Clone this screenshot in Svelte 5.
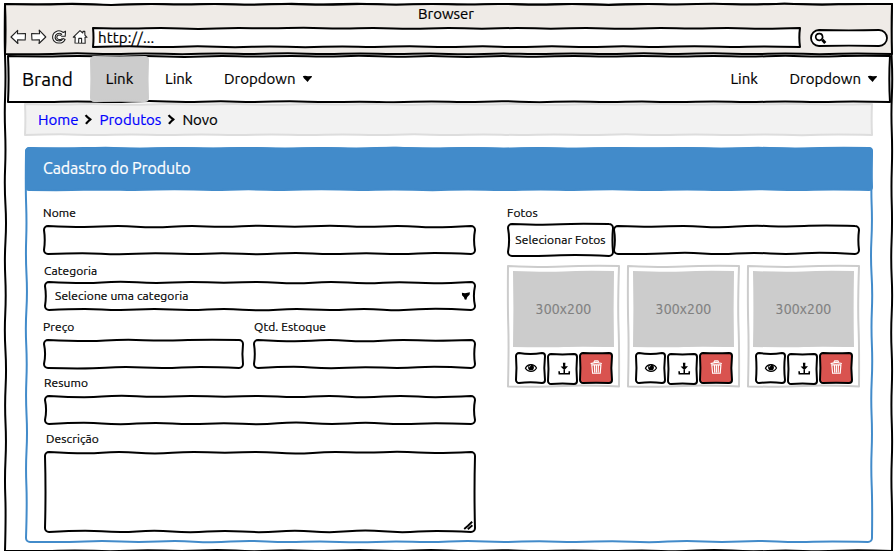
<script>
  // Pseudo-random generator, so that each frame keeps its own hand-drawn shape.
  function random(seed) {
    let s = (seed * 7919 + 104729) % 2147483647;
    return () => (s = (s * 16807) % 2147483647) / 2147483647;
  }

  // One wobbly edge, from a to b, smoothed through the midpoints.
  function edge(ax, ay, bx, by, amp, rnd) {
    const len = Math.hypot(bx - ax, by - ay);
    if (len < 2) return `L${bx} ${by}`;
    const n = Math.max(2, Math.round(len / 36));
    const nx = -(by - ay) / len;
    const ny = (bx - ax) / len;
    const pts = [];
    for (let i = 1; i < n; i++) {
      const t = i / n;
      const off = (i % 2 ? 1 : -0.4) * amp * (0.6 + rnd() * 0.8);
      pts.push([ax + (bx - ax) * t + nx * off, ay + (by - ay) * t + ny * off]);
    }
    let d = '';
    pts.forEach(([x, y], i) => {
      const next = pts[i + 1];
      const ex = next ? (x + next[0]) / 2 : bx;
      const ey = next ? (y + next[1]) / 2 : by;
      d += `Q${x.toFixed(2)} ${y.toFixed(2)} ${ex.toFixed(2)} ${ey.toFixed(2)}`;
    });
    return d;
  }

  function rough(w, h, r, amp, seed) {
    const rnd = random(seed);
    const k = r * 0.45;
    return (
      `M${r} 0` + edge(r, 0, w - r, 0, amp, rnd) + `C${w - k} 0 ${w} ${k} ${w} ${r}` +
      edge(w, r, w, h - r, amp, rnd) + `C${w} ${h - k} ${w - k} ${h} ${w - r} ${h}` +
      edge(w - r, h, r, h, amp, rnd) + `C${k} ${h} 0 ${h - k} 0 ${h - r}` +
      edge(0, h - r, 0, r, amp, rnd) + `C0 ${k} ${k} 0 ${r} 0Z`
    );
  }

  const photos = [1, 2, 3];
</script>

{#snippet frame(w, h, seed, r = 4, fill = '#fff', stroke = '#000', amp = 1.6, sw = 2)}
  <svg class="frame" width={w} height={h} aria-hidden="true">
    <path d={rough(w, h, r, amp, seed)} {fill} {stroke} stroke-width={sw} stroke-linejoin="round" />
  </svg>
{/snippet}

{#snippet caret()}
  <svg class="caret" width="11" height="8" viewBox="0 0 11 8"><path d="M.8 1.3 3 .8 6 1.2 9.8.9 9.9 2 7.7 4.2 5.6 6.9 3.9 5.2 1.9 3.2Z" /></svg>
{/snippet}

{#snippet chevron()}
  <svg class="chevron" width="8" height="11" viewBox="0 0 8 11"><path d="M1.6 1.2C2.6 2.6 4.4 4 6.3 5.4 5 6.7 3.2 8 2 9.9" /></svg>
{/snippet}

<div class="window">
  {@render frame(887, 547, 3, 0, '#fff', '#000', 1.2)}
  <header class="chrome">
    {@render frame(887, 50, 5, 0, '#efebe7', '#000', 1)}
    <div class="title">Browser</div>
    <div class="toolbar">
      <div class="icons">
        <svg width="17" height="16" viewBox="0 0 17 16"><path d="M1 8 7.7 1.3 7.4 4.8 15.5 4.6 15.2 11 7.5 10.8 7.9 14.5Z" /></svg>
        <svg width="17" height="16" viewBox="0 0 17 16"><path d="M14.8 8 8.2 1.2 8.6 4.8 .6 4.6 1 11 8.5 10.8 8 14.5Z" /></svg>
        <svg width="16" height="16" viewBox="0 0 16 16"><path d="M13.5 2.2 13.2 7.2 7.6 7.2 9.8 5.2C6.7 3 3 5 3.1 8.4 3.3 12 8.5 13.4 11 9.6L13.1 10.4C10.4 15.8 2.2 15 .7 9.3 -.2 3.3 6.4-.5 11.3 3.5Z" /><path d="M8.7 6.5C6.8 5.4 4.8 6.5 4.8 8.5 5.1 10.6 8 11.5 9.9 9.6" /></svg>
        <svg width="16" height="16" viewBox="0 0 16 16"><path d="M1.3 8.2 8 1.6 10.8 4 11 2.2 12.8 2.4 12.9 6.1 15 8.3 13 8.2 13.2 14.2 3 14 3.2 8.1ZM6.6 13.8 6.8 9.3 9.6 9.4 9.6 13.8" /></svg>
      </div>
      <div class="url">
        {@render frame(707, 19, 8, 0, '#fff', '#000', 1)}
        <span>http://...</span>
      </div>
      <div class="search">
        {@render frame(76, 16, 14, 8, '#fff', '#000', 0.5, 1.8)}
        <svg width="14" height="14" viewBox="0 0 14 14"><path d="M5.4 1.6C2.9 1.5 1.6 3.3 1.7 5.2 2 7.6 4 8.6 5.8 8.3 8 7.9 9 6 8.5 4.1 8.1 2.4 6.7 1.5 5.4 1.6Z" /><path class="handle" d="M8.3 7.8 11.3 11" /></svg>
      </div>
    </div>
  </header>

  <nav class="navbar">
    {@render frame(882, 46, 21, 0, '#fff', '#000', 1)}
    <span class="brand">Brand</span>
    <span class="item active">
      {@render frame(57, 44, 31, 3, '#ccc', '#ccc', 0.7)}
      <span>Link</span>
    </span>
    <span class="item second">Link</span>
    <span class="item drop">Dropdown {@render caret()}</span>
    <span class="spacer"></span>
    <span class="item right">Link</span>
    <span class="item drop last">Dropdown {@render caret()}</span>
  </nav>

  <div class="crumbs">
    {@render frame(847, 31, 44, 0, '#f2f2f2', '#ddd', 0.9)}
    <a href="#home">Home</a>
    {@render chevron()}
    <a href="#produtos">Produtos</a>
    {@render chevron()}
    <span>Novo</span>
  </div>

  <main class="panel">
    {@render frame(846, 394, 51, 4, '#fff', '#428bca', 1.2)}
    <div class="heading">
      {@render frame(846, 42, 52, 3, '#428bca', '#428bca', 0.9)}
      <h1>Cadastro do Produto</h1>
    </div>
    <div class="columns">
      <form class="form">
        <div class="label">Nome</div>
        <div class="input">{@render frame(431, 28, 61)}</div>
        <div class="label cat">Categoria</div>
        <div class="input inset select">
          {@render frame(430, 28, 62)}
          <span>Selecione uma categoria</span>
          <svg width="9" height="9" viewBox="0 0 9 9"><path d="M.9.8 4 1.3 8.9.3 8.6 2.8 6.3 5 5.3 7.7 3.7 7.6 2.9 5.2 1 3.3Z" /></svg>
        </div>
        <div class="pair">
          <div class="price">
            <div class="label">Preço</div>
            <div class="input">{@render frame(199, 28, 63)}</div>
          </div>
          <div class="stock">
            <div class="label">Qtd. Estoque</div>
            <div class="input">{@render frame(221, 28, 64)}</div>
          </div>
        </div>
        <div class="label resumo">Resumo</div>
        <div class="input inset">{@render frame(430, 28, 65)}</div>
        <div class="label desc">Descrição</div>
        <div class="input inset area">
          {@render frame(430, 80, 66)}
          <svg width="12" height="11" viewBox="0 0 12 11"><path d="M1.2 8 5 4.8 9.2.8M4.8 8.3 9.4 4.3" /></svg>
        </div>
      </form>

      <section class="gallery">
        <div class="label">Fotos</div>
        <div class="upload">
          <div class="choose">{@render frame(105, 32, 71)}<span>Selecionar Fotos</span></div>
          <div class="path">{@render frame(245, 28, 72)}</div>
        </div>
        <div class="cards">
          {#each photos as photo (photo)}
            <article class="card">
              {@render frame(111, 120.5, 81, 0, '#fff', '#ccc', 1.3)}
              <div class="thumb">
                {@render frame(101, 76, 82, 0, '#ccc', 'none', 1)}
                <span>300x200</span>
              </div>
              <div class="actions">
                <div class="btn">
                  {@render frame(29, 30, 83, 3, '#fff', '#000', 1.3)}
                  <svg width="14" height="12" viewBox="0 0 14 12"><path d="M1.4 6.3C3.5 1.6 10 1.2 12.5 6 10.3 10.4 4 10.6 1.4 6.3Z" fill="none" stroke="#000" stroke-width="1.2" /><circle cx="7" cy="5.4" r="2.9" /><path d="M5.2 5.3C5.3 4.2 5.9 3.7 6.7 3.7" fill="none" stroke="#fff" stroke-width=".9" /></svg>
                </div>
                <div class="btn save">
                  {@render frame(29, 30, 84, 3, '#fff', '#000', 1.3)}
                  <svg width="14" height="14" viewBox="0 0 14 14"><path d="M6.9.8H9.4L9.2 4.3H12L8.3 8.3 4.6 4.4H7.1ZM7.5 8H9V11H7.5Z" /><path d="M3.1 9.3 3.3 11.8H13.2L13.3 9.3" fill="none" stroke="#000" stroke-width="1.6" /></svg>
                </div>
                <div class="btn danger">
                  {@render frame(32, 30, 85, 3, '#d9534f', '#000', 1)}
                  <svg width="14" height="16" viewBox="0 0 14 16"><path d="M1.6 3.6 7.1 2.4 12.9 3.5M4.9 2.2 5.7.8 8.9.9 9.7 2.3M2.8 4.8 3.6 13.2H11.2L11.9 4.8ZM5.4 5.3 5.7 12.5M7.4 5.3V12.5M9.4 5.3 9.2 12.5" fill="none" stroke="#fff" stroke-width="1.15" /></svg>
                </div>
              </div>
            </article>
          {/each}
        </div>
      </section>
    </div>
  </main>
</div>

<style>
  :global(body) {
    background: #fff;
    overflow: hidden;
  }

  .window {
    position: relative;
    box-sizing: border-box;
    width: 887px;
    height: 547px;
    margin: 4px 0 0 5px;
    font-family: Ubuntu, 'Noto Sans', sans-serif;
    font-size: 15px;
    line-height: 16px;
    color: #000;
    white-space: nowrap;
    -webkit-text-stroke: 0.2px currentColor;
  }

  .window :global(svg) {
    display: block;
    flex: none;
    overflow: visible;
  }

  .window .frame {
    position: absolute;
    left: 0;
    top: 0;
  }

  span,
  a,
  h1 {
    position: relative;
  }

  /* Browser chrome */
  .chrome {
    position: relative;
    height: 50px;
  }

  .title {
    position: relative;
    height: 24px;
    padding-top: 2px;
    box-sizing: border-box;
    text-align: center;
    text-indent: -5px;
  }

  .toolbar {
    position: relative;
    display: flex;
    height: 19px;
  }

  .icons {
    display: flex;
    gap: 4px;
    width: 88px;
    padding: 1px 0 0 5px;
    box-sizing: border-box;
  }

  .icons path {
    fill: #fff;
    stroke: #222;
    stroke-width: 1.1;
    stroke-linejoin: round;
  }

  .url {
    position: relative;
    width: 707px;
    height: 19px;
    line-height: 19px;
    letter-spacing: 0.15px;
  }

  .url span {
    margin-left: 5px;
  }

  .search {
    position: relative;
    width: 76px;
    height: 16px;
    margin: 2px 0 0 10.5px;
  }

  .search svg:last-child {
    position: relative;
    margin: 2px 0 0 3px;
  }

  .search svg:last-child path {
    fill: none;
    stroke: #000;
    stroke-width: 1.7;
  }

  .search svg:last-child .handle {
    stroke-width: 3;
  }

  /* Navigation bar */
  .navbar {
    position: relative;
    display: flex;
    align-items: center;
    width: 882px;
    height: 46px;
    margin: 2px 0 0 3px;
  }

  .brand {
    width: 69px;
    margin-left: 14px;
    font-size: 19px;
  }

  .item {
    display: flex;
    align-items: center;
  }

  .active {
    width: 57px;
    height: 44px;
    margin-right: 17px;
    justify-content: center;
  }

  .second {
    width: 59px;
  }

  .drop {
    gap: 6px;
  }

  .spacer {
    flex: 1;
  }

  .right {
    width: 59px;
  }

  .last {
    margin-right: 12px;
  }

  /* Breadcrumb */
  .crumbs {
    position: relative;
    display: flex;
    align-items: center;
    width: 834px;
    height: 31px;
    margin: 2px 0 0 20px;
    padding-left: 13px;
  }

  .crumbs a {
    color: #00f;
    text-decoration: none;
  }

  .chevron {
    position: relative;
    margin: 0 7px 0 6px;
    fill: none;
    stroke: #000;
    stroke-width: 2.2;
  }

  /* Panel */
  .panel {
    position: relative;
    width: 846px;
    height: 394px;
    margin: 13px 0 0 21px;
  }

  .heading {
    position: relative;
    height: 42px;
  }

  h1 {
    margin: 0 0 0 17px;
    font-size: 16px;
    font-weight: 400;
    line-height: 41px;
    letter-spacing: -0.1px;
    color: #fff;
  }

  .columns {
    position: relative;
    display: flex;
    gap: 33px;
    padding: 14px 0 0 18px;
    font-size: 12px;
    letter-spacing: 0.1px;
  }

  .form {
    width: 431px;
  }

  .label {
    height: 16px;
    margin: 0 0 6px -1px;
    line-height: 18px;
  }

  .cat {
    margin: 8px 0 4px;
  }

  .resumo {
    margin: 6px 0 6px;
  }

  .desc {
    margin: 6px 0 6px 2px;
  }

  .input {
    position: relative;
    height: 28px;
  }

  .inset {
    margin-left: 1px;
  }

  .select {
    display: flex;
    align-items: center;
    justify-content: space-between;
    padding: 0 5px 0 10px;
  }

  .select svg:last-child {
    position: relative;
  }

  .area {
    display: flex;
    align-items: flex-end;
    justify-content: flex-end;
    height: 80px;
  }

  .area svg:last-child {
    position: relative;
    fill: none;
    stroke: #000;
    stroke-width: 1.9;
  }

  .pair {
    display: flex;
    gap: 11px;
    margin-top: 8px;
  }

  .price {
    width: 199px;
  }

  .stock {
    width: 221px;
  }

  .stock .label {
    margin-left: 0;
  }

  /* Photos */
  .upload {
    display: flex;
    align-items: center;
    height: 32px;
    margin-top: -2px;
  }

  .choose {
    position: relative;
    width: 105px;
    height: 32px;
    margin-top: -1px;
    line-height: 31px;
    text-align: center;
  }

  .path {
    position: relative;
    width: 245px;
    height: 28px;
    margin-left: 1px;
  }

  .cards {
    display: flex;
    gap: 9px;
    margin-top: 10px;
  }

  .card {
    position: relative;
    width: 101px;
    height: 115px;
    padding: 5px 5px 0;
  }

  .thumb {
    position: relative;
    height: 76px;
    font-size: 14px;
    line-height: 76px;
    letter-spacing: 0.2px;
    text-align: center;
    color: #808080;
  }

  .actions {
    display: flex;
    gap: 3px;
    padding: 6px 0 0 3px;
  }

  .btn {
    position: relative;
    display: flex;
    flex: none;
    align-items: center;
    justify-content: center;
    width: 29px;
    height: 30px;
  }

  .btn svg:last-child {
    position: relative;
  }

  .save {
    margin-top: 1px;
  }

  .danger {
    width: 32px;
  }
</style>
